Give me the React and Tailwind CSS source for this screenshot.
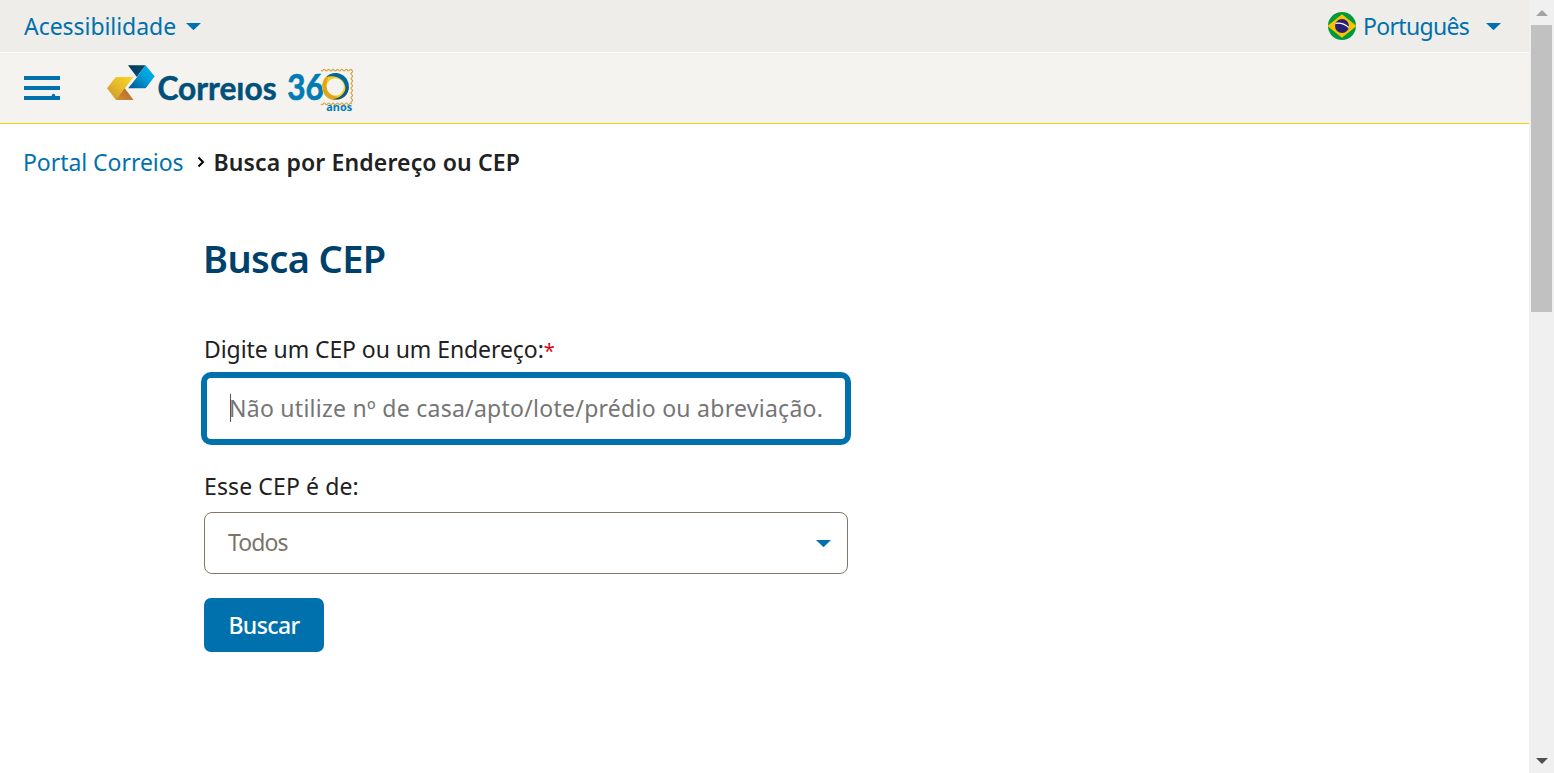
import React from 'react';

function Caret({ className = '' }) {
  return (
    <svg viewBox="0 0 15 7" className={`h-[7px] w-[15px] shrink-0 fill-[#0071ad] ${className}`}>
      <path d="M0 0H15L7.5 7.2Z" />
    </svg>
  );
}

function BrazilFlag() {
  return (
    <svg viewBox="0 0 28 28" className="size-7">
      <defs>
        <clipPath id="flag"><circle cx="14" cy="14" r="14" /></clipPath>
        <clipPath id="globe"><circle cx="14" cy="14" r="7" /></clipPath>
      </defs>
      <g clipPath="url(#flag)">
        <rect width="28" height="28" fill="#009a3d" />
        <path d="M14 2.3L28.6 14L14 25.7L-.6 14Z" fill="#fcc200" />
      </g>
      <circle cx="14" cy="14" r="7" fill="#291f73" />
      <path d="M6 11.6Q15 9.6 21.5 16.2" fill="none" stroke="#fff" strokeWidth="1.4" clipPath="url(#globe)" />
    </svg>
  );
}

function MenuIcon() {
  return (
    <svg viewBox="0 0 36 24" className="h-6 w-9 fill-[#0071ad]">
      <path d="M0 0H36V4H0ZM0 10H36V14H0ZM0 20H36V24H0Z" />
      <circle cx="29.5" cy="19.4" r="1.7" />
    </svg>
  );
}

function Logo() {
  return (
    <svg viewBox="104 60 252 56" className="h-14 w-[252px]">
      <defs>
        <linearGradient id="cyan" x1="1" y1="0" x2="0" y2="1">
          <stop offset="0" stopColor="#00b9f2" />
          <stop offset=".45" stopColor="#009fdc" />
          <stop offset="1" stopColor="#00548a" />
        </linearGradient>
        <linearGradient id="navy" x1="0" y1="0" x2="1" y2="1">
          <stop offset="0" stopColor="#00344f" />
          <stop offset="1" stopColor="#075a83" />
        </linearGradient>
        <linearGradient id="gold" x1="1" y1="0" x2="0" y2="1">
          <stop offset="0" stopColor="#fbd724" />
          <stop offset=".5" stopColor="#e6b92b" />
          <stop offset="1" stopColor="#c99330" />
        </linearGradient>
        <linearGradient id="amber" x1="0" y1="1" x2="1" y2="0">
          <stop offset="0" stopColor="#cf9332" />
          <stop offset="1" stopColor="#b3602f" />
        </linearGradient>
      </defs>
      <path d="M145.5 65.2L154.7 76.2L146.5 87.3Q146 88.2 145 88.2H128.2L137.2 77Z" fill="url(#cyan)" />
      <path d="M128 65.2H145.5L136.8 77Z" fill="url(#navy)" />
      <path d="M133.3 77H116.8Q115.8 77 115.2 77.8L107 88.3L116 100L124.8 88.5Z" fill="url(#gold)" />
      <path d="M124.7 88.3L133.6 100H115.8Z" fill="url(#amber)" />
      <text x="157.4" y="100" fontSize="32.5" textLength="119.2" lengthAdjust="spacingAndGlyphs" strokeWidth=".5" className="fill-[#00507a] stroke-[#00507a] font-['Lato',sans-serif] font-bold">Correıos</text>
      <text x="287.2" y="100.2" fontSize="36" textLength="36.5" lengthAdjust="spacingAndGlyphs" strokeWidth=".7" className="fill-[#007bb5] stroke-[#007bb5] font-['Lato',sans-serif] font-bold">36</text>
      <path
        d="M321 70.2q1.1 1.6 2.2 0t2.2 0t2.2 0t2.2 0t2.2 0t2.2 0t2.2 0t2.2 0t2.2 0t2.2 0t2.2 0t2.2 0t2.2 0t2.2 0q1.6 1.2 0 2.4t0 2.4t0 2.4t0 2.4t0 2.4t0 2.4t0 2.4t0 2.4t0 2.4t0 2.4t0 2.4t0 2.4t0 2.4t0 2.4q-1.1-1.6-2.2 0t-2.2 0t-2.2 0t-2.2 0t-2.2 0t-2.2 0t-2.2 0t-2.2 0t-2.2 0t-2.2 0t-2.2 0t-2.2 0t-2.2 0t-2.2 0"
        fill="none" stroke="#d6a748" strokeWidth="1.2"
      />
      <circle cx="335.3" cy="86.6" r="13.4" fill="#f9cf1d" />
      <path d="M325.4 77.6C321 84 321.6 92.5 327 97.3C332.5 101.8 341 100.6 345.6 95.3C339.5 97.8 332.4 97.1 329 92.5C325.8 88 325.8 82 328.4 77Z" fill="#dfa51e" />
      <path d="M326 77C332 70.6 342.5 71.9 347 79.5C350.6 86 348.8 94 343.3 97.7C346.6 92.5 346.4 84.8 342 80.2C338 76.2 331.5 75.4 326 77Z" fill="#0068a5" />
      <path d="M333 99.2C339 98.6 345 94 346.3 86.5L348.7 87C348 95.5 341.5 101.2 333 99.2Z" fill="#0a5a8a" />
      <circle cx="335.3" cy="86.8" r="8.6" fill="#f4f3ef" />
      <text x="326.3" y="111.2" fontSize="11" textLength="26" lengthAdjust="spacingAndGlyphs" className="fill-[#007bb5] font-['Noto_Sans',sans-serif] font-bold">anos</text>
    </svg>
  );
}

function Scrollbar() {
  return (
    <div className="flex w-[25px] shrink-0 flex-col items-center bg-[#f0f0f0]">
      <div className="flex h-[25px] shrink-0 items-center justify-center">
        <svg viewBox="0 0 12 6" className="h-1.5 w-3 fill-[#a3a3a3]"><path d="M0 6L6 0L12 6Z" /></svg>
      </div>
      <div className="h-[287px] w-[21px] bg-[#c1c1c1]" />
      <div className="mt-auto flex h-[25px] items-center justify-center">
        <svg viewBox="0 0 12 6" className="h-1.5 w-3 fill-[#505050]"><path d="M0 0L6 6L12 0Z" /></svg>
      </div>
    </div>
  );
}

export default function App() {
  return (
    <div className="flex h-[773px] w-[1554px] overflow-hidden bg-white font-['Noto_Sans',sans-serif] text-[23px] leading-8 text-[#212121]">
      <div className="flex min-w-0 flex-1 flex-col">
        <div className="flex h-[53px] items-center justify-between border-b border-white bg-[#eeede9] pr-7 pl-6 text-[#0071ad]">
          <a className="flex items-center gap-[10px]">
            <span className="tracking-[-0.05px]">Acessibilidade</span>
            <Caret />
          </a>
          <a className="flex items-center">
            <BrazilFlag />
            <span className="ml-[7px] tracking-[-0.7px]">Português</span>
            <Caret className="ml-[17px]" />
          </a>
        </div>

        <header className="flex h-[71px] items-center border-b border-[#f7d117] bg-[#f4f3ef] pl-6">
          <MenuIcon />
          <div className="ml-11"><Logo /></div>
        </header>

        <nav className="mt-[22px] flex items-center pl-[23px]">
          <a className="tracking-[-0.05px] text-[#0071ad]">Portal Correios</a>
          <svg viewBox="0 0 8 12" className="mt-[-1px] ml-[13px] h-3 w-2 fill-none stroke-black stroke-2">
            <path d="M1.5 1.5L6 6L1.5 10.5" />
          </svg>
          <span className="ml-[9px] font-semibold tracking-[0.13px]">Busca por Endereço ou CEP</span>
        </nav>

        <main className="ml-[204px] w-[644px] pt-[54px]">
          <h1 className="-ml-px text-[38px] leading-[52px] font-semibold tracking-[-0.6px] text-[#00416b]">Busca CEP</h1>

          <form className="mt-[49px] flex flex-col">
            <label className="tracking-[-0.08px]">Digite um CEP ou um Endereço:<span className="text-xl text-[#d0021b]">*</span></label>
            <div className="-mx-[3px] mt-[7px] flex h-[73px] items-center rounded-[10px] border-[6px] border-[#0071ad] pb-[2px] pl-[23px]">
              <span className="h-7 w-px bg-[#555]" />
              <span className="-ml-[2px] tracking-[0.27px] whitespace-nowrap text-[#757575]">Não utilize nº de casa/apto/lote/prédio ou abreviação.</span>
            </div>

            <label className="mt-[25px] tracking-[0.12px]">Esse CEP é de:</label>
            <div className="mt-[10px] flex h-[62px] items-center justify-between rounded-lg border border-[#83776b] pr-4 pl-[23px] text-[#7d7469]">
              <span className="pb-[2px] tracking-[-0.9px]">Todos</span>
              <Caret />
            </div>

            <button type="button" className="mt-6 flex h-[54px] w-[120px] items-center justify-center rounded-[7px] bg-[#0071ad] font-medium tracking-[-0.6px] text-white">Buscar</button>
          </form>
        </main>
      </div>
      <Scrollbar />
    </div>
  );
}
